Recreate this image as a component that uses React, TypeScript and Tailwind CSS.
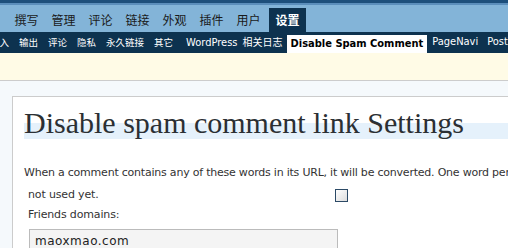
import React from "react";

const cjk = "font-['Noto_Sans_CJK_SC',sans-serif]";

export default function App() {
  const tabs = ["撰写", "管理", "评论", "链接", "外观", "插件", "用户"];
  return (
    <div className="w-[508px] h-[248px] overflow-hidden bg-[#f5f9fc] font-['DejaVu_Sans_Condensed','DejaVu_Sans',sans-serif] font-stretch-condensed text-[#333]">
      <div className="h-[3px] bg-[#1d4f7b]" />
      <div className="h-[2px] bg-[#5b8ebb]" />
      {/* main tabs */}
      <div className="flex items-end h-[27px] bg-[#83b4d8] whitespace-nowrap">
        <div className={`${cjk} shrink-0 text-[12px] text-[#1a1a1a] ml-[-40px] w-[48px] h-[24px] flex items-center justify-end pr-[12px] overflow-hidden`}>控制板</div>
        {tabs.map((t) => (
          <div
            key={t}
            className={`${cjk} shrink-0 text-[12px] text-[#1a1a1a] w-[37px] h-[24px] flex items-center justify-center`}
          >
            {t}
          </div>
        ))}
        <div className={`${cjk} shrink-0 text-[12px] font-bold text-white bg-[#0d324f] ml-[2px] w-[37px] h-[24px] flex items-center justify-center`}>
          设置
        </div>
      </div>
      {/* sub tabs */}
      <div className="flex items-end h-[21px] bg-[#0d324f] whitespace-nowrap text-[11px] text-white">
        <div className="flex items-center h-[21px] gap-[10px] ml-[-10px] shrink-0">
          <span className={`${cjk} text-[9.5px]`}>导入</span>
          <span className={`${cjk} text-[9.5px]`}>输出</span>
          <span className={`${cjk} text-[9.5px]`}>评论</span>
          <span className={`${cjk} text-[9.5px]`}>隐私</span>
          <span className={`${cjk} text-[9.5px]`}>永久链接</span>
          <span className={`${cjk} text-[9.5px]`}>其它</span>
          <span className="ml-[3px]">
            WordPress <span className={`${cjk} text-[10px] ml-[2px]`}>相关日志</span>
          </span>
        </div>
        <div className="ml-[4px] shrink-0 h-[18px] bg-white text-black font-bold px-[4px] flex items-center">
          Disable Spam Comment
        </div>
        <div className="flex items-center h-[21px] gap-[9px] ml-[5px] shrink-0">
          <span>PageNavi</span>
          <span>PostViews</span>
        </div>
      </div>
      {/* notice band */}
      <div className="h-[27px] bg-[#fffbe6]" />
      <div className="h-px bg-[#cccccc]" />
      <div className="h-[15px]" />
      {/* panel */}
      <div className="ml-[12px] bg-white border-l border-t border-[#cccccc] pl-[11px] pt-[6px]">
        <h2 className="font-['Liberation_Serif',serif] text-[30px] leading-[40px] text-[#2b2f33] bg-[linear-gradient(to_bottom,transparent_0,transparent_20px,#e5f1fb_20px,#e5f1fb_36px,transparent_36px)] whitespace-nowrap">
          Disable spam comment link Settings
        </h2>
        <div className="mt-[22px] text-[11px] leading-[20px] text-[#333] font-['DejaVu_Sans',sans-serif] font-stretch-normal">
          <p className="whitespace-nowrap leading-[16px] tracking-[-0.22px]">
            When a comment contains any of these words in its URL, it will be converted. One word per line.
          </p>
          <div className="flex items-center h-[20px] pl-[4px] mt-[4px] tracking-[-0.15px]">
            <span className="w-[307px]">not used yet.</span>
            <span className="w-[13px] h-[13px] border border-[#2c4a66] bg-[linear-gradient(135deg,#ffffff,#dcdcdc)]" />
          </div>
          <div className="h-[20px] pl-[4px] flex items-center tracking-[-0.15px]">Friends domains:</div>
          <div className="ml-[5px] mt-[4px] w-[309px] h-[30px] bg-[#f4f4f4] border border-[#bbbbbb] px-[5px] pt-[1px] text-[12px] text-[#222] tracking-[0.5px]">
            maoxmao.com
          </div>
        </div>
      </div>
    </div>
  );
}
